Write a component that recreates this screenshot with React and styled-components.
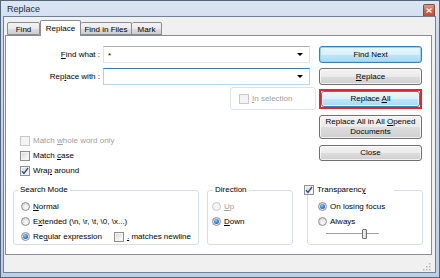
import styled, { createGlobalStyle } from "styled-components";

const GlobalStyle = createGlobalStyle`
  html, body { margin: 0; padding: 0; background: #ffffff; }
  body {
    font-family: "Liberation Sans", Arial, sans-serif;
    font-size: 8px;
    color: #000;
  }
  * { box-sizing: border-box; }
`;

const Window = styled.div`
  width: 440px;
  height: 278px;
  border: 1px solid #55657a;
  background: linear-gradient(180deg, #dbe6f3 0%, #c9daee 12%, #bccfe7 100%);
  padding: 0 3px 4px 2px;
  display: flex;
  flex-direction: column;
`;

const TitleBar = styled.div`
  height: 15px;
  flex: none;
  display: flex;
  align-items: center;
  padding-left: 4px;
  font-size: 9px;
  color: #1e2b3a;
`;

const CloseBox = styled.span`
  margin-left: auto;
  margin-right: 1px;
  align-self: flex-end;
  width: 12px;
  height: 12px;
  border: 1px solid #8a4a3e;
  border-bottom: none;
  border-radius: 2px 2px 0 0;
  background: linear-gradient(180deg, #e49a86 0%, #d0664e 50%, #c24a30 100%);
  display: flex;
  align-items: center;
  justify-content: center;
`;

const Client = styled.div`
  flex: 1;
  border: 1px solid #6f8195;
  background: #f0f0f0;
  display: flex;
  flex-direction: column;
  padding: 3px 3px 0 1px;
`;

const TabRow = styled.div`
  height: 15px;
  flex: none;
  display: flex;
  align-items: flex-end;
  padding-left: 2px;
`;

const Tab = styled.div`
  width: ${(p) => p.$w}px;
  height: ${(p) => (p.$active ? 16 : 13)}px;
  border: 1px solid #898c95;
  border-bottom: ${(p) => (p.$active ? "none" : "1px solid #898c95")};
  border-left: ${(p) => (p.$first || p.$active ? "1px solid #898c95" : "none")};
  border-radius: 2px 2px 0 0;
  background: ${(p) =>
    p.$active ? "#ffffff" : "linear-gradient(180deg, #f3f3f3 0%, #ebebeb 50%, #dddddd 51%, #cfcfcf 100%)"};
  margin-bottom: ${(p) => (p.$active ? -1 : 0)}px;
  position: relative;
  z-index: ${(p) => (p.$active ? 1 : 0)};
  display: flex;
  align-items: center;
  justify-content: center;
  padding-top: ${(p) => (p.$active ? 0 : 1)}px;
  white-space: nowrap;
`;

const Panel = styled.div`
  height: 220px;
  flex: none;
  border: 1px solid #898c95;
  background: #ffffff;
  padding: 10px 8px 0 0;
  display: flex;
  flex-direction: column;
`;

const Footer = styled.div`
  flex: 1;
  display: flex;
  justify-content: flex-end;
  align-items: flex-end;
  padding: 0 1px 1px 0;
`;

const TopGrid = styled.div`
  display: grid;
  grid-template-columns: 310px 103px;
  column-gap: 3px;
  align-items: start;
`;

const LeftCol = styled.div`
  display: flex;
  flex-direction: column;
`;

const RightCol = styled.div`
  display: flex;
  flex-direction: column;
`;

const FieldRow = styled.div`
  display: flex;
  align-items: center;
  height: 17px;
  margin-top: ${(p) => p.$gap || 0}px;
`;

const FieldLabel = styled.label`
  width: 97px;
  padding-right: 3px;
  text-align: right;
  white-space: nowrap;
`;

const Combo = styled.div`
  width: 207px;
  height: 17px;
  background: #fff;
  border: 1px solid;
  border-color: ${(p) =>
    p.$focus ? "#3d7bad #b5cfe7 #b7d9ed #b5cfe7" : "#abadb3 #e2e3ea #e3e9ef #e2e3ea"};
  display: flex;
  align-items: center;
  padding: 0 6px 0 4px;
`;

const ComboText = styled.span`
  flex: 1;
  line-height: 1;
  padding-top: 2px;
`;

const Arrow = styled.span`
  width: 0;
  height: 0;
  border-left: 3px solid transparent;
  border-right: 3px solid transparent;
  border-top: 3px solid #000;
`;

const SelectionBox = styled.div`
  align-self: flex-end;
  margin-top: 2px;
  width: 86px;
  height: 23px;
  border: 1px solid #dce4ea;
  border-radius: 3px;
  display: flex;
  align-items: center;
  gap: 3px;
  padding-left: 8px;
  color: #a0a0a0;
`;

const CheckList = styled.div`
  margin-top: 23px;
  padding-left: 14px;
  display: flex;
  flex-direction: column;
`;

const OptionRow = styled.div`
  height: ${(p) => p.$h || 15}px;
  display: flex;
  align-items: center;
  gap: 3px;
  white-space: nowrap;
  color: ${(p) => (p.$disabled ? "#a0a0a0" : "#000")};
`;

const Box = styled.span`
  flex: none;
  width: 10px;
  height: 10px;
  border: 1px solid ${(p) => (p.$disabled ? "#c8c8c8" : "#8e8f8f")};
  background: ${(p) =>
    p.$disabled ? "#f4f4f4" : "linear-gradient(135deg, #d6d6d6 0%, #f0f0f0 60%, #ffffff 100%)"};
  box-shadow: inset 0 0 0 1px ${(p) => (p.$disabled ? "#f4f4f4" : "#f4f4f4")};
  display: flex;
  align-items: center;
  justify-content: center;
  margin-left: ${(p) => p.$ml || 0}px;
`;

const Radio = styled.span`
  flex: none;
  width: 9px;
  height: 9px;
  border-radius: 50%;
  border: 1px solid ${(p) => (p.$disabled ? "#c8c8c8" : "#8e8f8f")};
  background: ${(p) =>
    p.$disabled ? "#f4f4f4" : "radial-gradient(circle at 60% 65%, #ffffff 0%, #e6e6e6 50%, #c9c9c9 100%)"};
  display: flex;
  align-items: center;
  justify-content: center;
  &::after {
    content: "";
    display: ${(p) => (p.$on ? "block" : "none")};
    width: 5px;
    height: 5px;
    border-radius: 50%;
    background: radial-gradient(circle at 40% 35%, #8fd0ff 0%, #2b7cc8 55%, #134a85 100%);
  }
`;

const Key = styled.span`
  text-decoration: underline;
`;

const Button = styled.div`
  height: ${(p) => p.$h || 17}px;
  margin-top: ${(p) => p.$mt || 0}px;
  border: 1px solid ${(p) => (p.$blue ? "#3c7fb1" : "#707070")};
  border-radius: 3px;
  background: ${(p) =>
    p.$blue
      ? "linear-gradient(180deg, #eaf6fd 0%, #d9f0fc 50%, #bee6fd 51%, #a7d9f5 100%)"
      : "linear-gradient(180deg, #f2f2f2 0%, #ebebeb 50%, #dddddd 51%, #cfcfcf 100%)"};
  box-shadow: inset 0 0 0 1px ${(p) => (p.$glow ? "#8fd3f5" : "rgba(255,255,255,0.7)")};
  display: flex;
  align-items: center;
  justify-content: center;
  text-align: center;
  line-height: 10px;
  padding: 0 4px;
`;

const Highlight = styled.div`
  margin-top: 4px;
  height: 20px;
  border: 2px solid #e2262b;
  display: flex;
  flex-direction: column;
  & > ${Button} {
    flex: 1;
    height: auto;
  }
`;

const GroupRow = styled.div`
  display: flex;
  margin-top: 7px;
  padding-left: 7px;
  align-items: flex-start;
`;

const Group = styled.fieldset`
  margin: 0 0 0 ${(p) => p.$ml || 0}px;
  min-width: 0;
  width: ${(p) => p.$w}px;
  height: 60px;
  border: 1px solid #d5dfe5;
  border-radius: 3px;
  padding: 0 0 0 ${(p) => p.$pl || 7}px;
`;

const Legend = styled.legend`
  margin-left: ${(p) => p.$ml ?? -3}px;
  padding: 0 2px;
  line-height: 10px;
  height: 10px;
  width: ${(p) => (p.$w ? `${p.$w}px` : "auto")};
  display: flex;
  align-items: center;
  gap: 3px;
`;

const Rows = styled.div`
  margin-top: 4px;
  display: flex;
  flex-direction: column;
`;

const Slider = styled.div`
  height: 10px;
  margin-left: 8px;
  width: 53px;
  display: flex;
  align-items: center;
  position: relative;
`;

const Track = styled.span`
  flex: 1;
  height: 2px;
  border-top: 1px solid #a0a0a0;
  border-bottom: 1px solid #ffffff;
  background: #e7eaea;
`;

const Thumb = styled.span`
  position: absolute;
  left: 36px;
  top: 0;
  width: 5px;
  height: 10px;
  border: 1px solid #707070;
  border-radius: 1px;
  background: linear-gradient(90deg, #f4f4f4, #d8d8d8);
`;

const Check = () => (
  <svg width="8" height="8" viewBox="0 0 8 8">
    <path d="M1 4.2 L3 6.4 L7 1" fill="none" stroke="#2f4a8a" strokeWidth="1.4" />
  </svg>
);

const Grip = () => (
  <svg width="9" height="9" viewBox="0 0 9 9">
    {[
      [7, 1],
      [4, 4],
      [7, 4],
      [1, 7],
      [4, 7],
      [7, 7],
    ].map(([x, y]) => (
      <rect key={`${x}-${y}`} x={x} y={y} width="1.5" height="1.5" fill="#b8b8b8" />
    ))}
  </svg>
);

export default function App() {
  return (
    <>
      <GlobalStyle />
      <Window>
        <TitleBar>
          Replace
          <CloseBox>
            <svg width="6" height="5" viewBox="0 0 6 5">
              <path d="M0.5 0.5 L5.5 4.5 M5.5 0.5 L0.5 4.5" stroke="#fff" strokeWidth="1.3" />
            </svg>
          </CloseBox>
        </TitleBar>
        <Client>
          <TabRow>
            <Tab $w={33} $first>Find</Tab>
            <Tab $w={41} $active>Replace</Tab>
            <Tab $w={51}>Find in Files</Tab>
            <Tab $w={30}>Mark</Tab>
          </TabRow>
          <Panel>
            <TopGrid>
              <LeftCol>
                <FieldRow>
                  <FieldLabel>
                    <Key>F</Key>ind what :
                  </FieldLabel>
                  <Combo>
                    <ComboText>*</ComboText>
                    <Arrow />
                  </Combo>
                </FieldRow>
                <FieldRow $gap={5}>
                  <FieldLabel>
                    Rep<Key>l</Key>ace with :
                  </FieldLabel>
                  <Combo $focus>
                    <ComboText />
                    <Arrow />
                  </Combo>
                </FieldRow>
                <SelectionBox>
                  <Box $disabled />
                  <span>
                    <Key>I</Key>n selection
                  </span>
                </SelectionBox>
                <CheckList>
                  <OptionRow $disabled>
                    <Box $disabled />
                    <span>
                      Match <Key>w</Key>hole word only
                    </span>
                  </OptionRow>
                  <OptionRow>
                    <Box />
                    <span>
                      Match <Key>c</Key>ase
                    </span>
                  </OptionRow>
                  <OptionRow>
                    <Box>
                      <Check />
                    </Box>
                    <span>
                      Wra<Key>p</Key> around
                    </span>
                  </OptionRow>
                </CheckList>
              </LeftCol>
              <RightCol>
                <Button $blue $glow>Find Next</Button>
                <Button $mt={5}>
                  <span>
                    <Key>R</Key>eplace
                  </span>
                </Button>
                <Highlight>
                  <Button $blue>
                    <span>
                      Replace <Key>A</Key>ll
                    </span>
                  </Button>
                </Highlight>
                <Button $mt={6} $h={24}>
                  <span>
                    Replace All in All <Key>O</Key>pened
                    <br />
                    Documents
                  </span>
                </Button>
                <Button $mt={6} $h={16}>Close</Button>
              </RightCol>
            </TopGrid>
            <GroupRow>
              <Group $w={186}>
                <Legend>Search Mode</Legend>
                <Rows>
                  <OptionRow>
                    <Radio />
                    <span>
                      <Key>N</Key>ormal
                    </span>
                  </OptionRow>
                  <OptionRow>
                    <Radio />
                    <span>
                      E<Key>x</Key>tended (\n, \r, \t, \0, \x...)
                    </span>
                  </OptionRow>
                  <OptionRow>
                    <Radio $on />
                    <span>
                      Re<Key>g</Key>ular expression
                    </span>
                    <Box $ml={9} />
                    <span>
                      <Key>.</Key> matches newline
                    </span>
                  </OptionRow>
                </Rows>
              </Group>
              <Group $w={86} $ml={8} $pl={4}>
                <Legend $ml={1}>Direction</Legend>
                <Rows>
                  <OptionRow $disabled>
                    <Radio $disabled />
                    <span>
                      <Key>U</Key>p
                    </span>
                  </OptionRow>
                  <OptionRow>
                    <Radio $on />
                    <span>
                      <Key>D</Key>own
                    </span>
                  </OptionRow>
                </Rows>
              </Group>
              <Group $w={116} $ml={14} $pl={10}>
                <Legend $ml={-16} $w={92}>
                  <Box>
                    <Check />
                  </Box>
                  <span>
                    Transparenc<Key>y</Key>
                  </span>
                </Legend>
                <Rows>
                  <OptionRow>
                    <Radio $on />
                    <span>On losing focus</span>
                  </OptionRow>
                  <OptionRow>
                    <Radio />
                    <span>Always</span>
                  </OptionRow>
                  <Slider>
                    <Track />
                    <Thumb />
                  </Slider>
                </Rows>
              </Group>
            </GroupRow>
          </Panel>
          <Footer>
            <Grip />
          </Footer>
        </Client>
      </Window>
    </>
  );
}
